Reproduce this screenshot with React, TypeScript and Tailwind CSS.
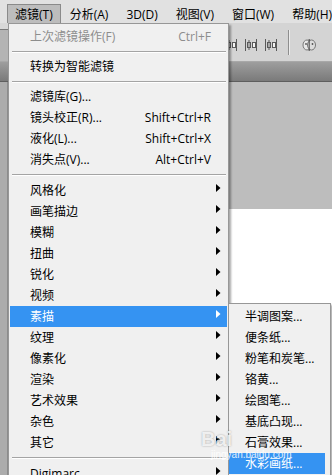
import React from "react";

type Row =
  | { kind: "item"; label: string; shortcut?: string; arrow?: boolean; disabled?: boolean; hl?: boolean }
  | { kind: "sep"; h: 9 | 10 };

const rows: Row[] = [
  { kind: "item", label: "上次滤镜操作(F)", shortcut: "Ctrl+F", disabled: true },
  { kind: "sep", h: 9 },
  { kind: "item", label: "转换为智能滤镜" },
  { kind: "sep", h: 9 },
  { kind: "item", label: "滤镜库(G)..." },
  { kind: "item", label: "镜头校正(R)...", shortcut: "Shift+Ctrl+R" },
  { kind: "item", label: "液化(L)...", shortcut: "Shift+Ctrl+X" },
  { kind: "item", label: "消失点(V)...", shortcut: "Alt+Ctrl+V" },
  { kind: "sep", h: 10 },
  { kind: "item", label: "风格化", arrow: true },
  { kind: "item", label: "画笔描边", arrow: true },
  { kind: "item", label: "模糊", arrow: true },
  { kind: "item", label: "扭曲", arrow: true },
  { kind: "item", label: "锐化", arrow: true },
  { kind: "item", label: "视频", arrow: true },
  { kind: "item", label: "素描", arrow: true, hl: true },
  { kind: "item", label: "纹理", arrow: true },
  { kind: "item", label: "像素化", arrow: true },
  { kind: "item", label: "渲染", arrow: true },
  { kind: "item", label: "艺术效果", arrow: true },
  { kind: "item", label: "杂色", arrow: true },
  { kind: "item", label: "其它", arrow: true },
  { kind: "sep", h: 10 },
  { kind: "item", label: "Digimarc", arrow: true },
];

const subItems = ["半调图案...", "便条纸...", "粉笔和炭笔...", "铬黄...", "绘图笔...", "基底凸现...", "石膏效果...", "水彩画纸..."];

const menus = ["分析(A)", "3D(D)", "视图(V)", "窗口(W)", "帮助(H)"];

function Arrow({ white }: { white?: boolean }) {
  return (
    <svg width="5" height="8" viewBox="0 0 5 8">
      <polygon points="0,0 4.5,4 0,8" fill={white ? "#ffffff" : "#000000"} />
    </svg>
  );
}

function AlignIcon() {
  return (
    <svg width="14" height="12" viewBox="0 0 14 12">
      <line x1="1.5" y1="0" x2="1.5" y2="12" stroke="#5a5a5a" />
      <rect x="3.5" y="3.5" width="3" height="5" fill="#f4f4f4" stroke="#5a5a5a" />
      <line x1="5" y1="1" x2="5" y2="11" stroke="#5a5a5a" />
      <rect x="8.5" y="3.5" width="3" height="5" fill="#f4f4f4" stroke="#5a5a5a" />
      <line x1="12.5" y1="0" x2="12.5" y2="12" stroke="#5a5a5a" />
    </svg>
  );
}

export default function App() {
  return (
    <div className="relative h-[475px] w-[332px] overflow-hidden bg-[#bababa] font-['Open_Sans','Noto_Sans_CJK_SC',sans-serif] text-[12px] text-black select-none">
      {/* menubar */}
      <div className="flex h-[23px] items-end overflow-hidden whitespace-nowrap bg-[#e1e1e1] pl-[7px] leading-[18px]">
        <div className="h-[19px] shrink-0 border border-b-0 border-[#8a8a8a] bg-[#bdbdbd] px-[7px] pt-[1px]">滤镜(T)</div>
        {menus.map((m) => (
          <div key={m} className="h-[19px] shrink-0 border border-transparent px-[8px] pt-[1px]">
            {m}
          </div>
        ))}
      </div>

      {/* workspace */}
      <div className="flex h-[452px] flex-col">
        {/* options bar */}
        <div className="flex h-[39px] border-b border-[#a8a8a8] bg-[#d4d4d4]">
          <div className="flex w-[8px] flex-col">
            <div className="h-[7px] border-b border-[#7a7a7a] bg-[#d8d8d8]" />
            <div className="flex-1 bg-[#b4b4b4]" />
          </div>
          <div className="flex flex-1 items-center pl-[216px]">
            <div className="flex items-center gap-[6px] pt-[6px]">
              <AlignIcon />
              <AlignIcon />
              <AlignIcon />
            </div>
            <div className="ml-[10px] h-[25px] w-[2px] border-l border-[#8e8e8e] border-r border-r-[#ececec]" />
            <div className="ml-[12px] pt-[5px]">
              <svg width="14" height="14" viewBox="0 0 14 14">
                <ellipse cx="5" cy="7" rx="4" ry="5" fill="#e8e8e8" stroke="#777" />
                <ellipse cx="9.5" cy="7" rx="4" ry="5" fill="#dcdcdc" stroke="#777" />
                <line x1="7.2" y1="1" x2="7.2" y2="13" stroke="#444" />
                <circle cx="4" cy="6" r="0.9" fill="#555" />
                <circle cx="10.5" cy="6" r="0.9" fill="#555" />
              </svg>
            </div>
          </div>
        </div>
        {/* dark bar */}
        <div className="h-[20px] border-b border-[#5e5e5e] bg-gradient-to-b from-[#9e9e9e] to-[#7a7a7a]" />
        {/* main area */}
        <div className="flex flex-1">
          <div className="w-[8px] border-r border-[#8c8c8c] bg-[#acacac]" />
          <div className="flex flex-1 flex-col">
            <div className="h-[127px] bg-[#bdbdbd]" />
            <div className="flex-1 bg-white" />
          </div>
        </div>
      </div>

      {/* filter menu */}
      <div className="absolute left-[8px] top-[23px] w-[221px] border border-[#979797] bg-[#f0f0f0] px-[1px] pt-[2px] pb-[4px] shadow-[2px_2px_2px_rgba(0,0,0,0.35)]">
        {rows.map((r, i) =>
          r.kind === "sep" ? (
            <div key={i} className={`flex ${r.h === 9 ? "h-[9px]" : "h-[10px]"} items-center pl-[2px] pr-[1px]`}>
              <div className="w-full border-t border-b border-[#a4a4a4] border-b-white" />
            </div>
          ) : (
            <div
              key={i}
              className={`flex h-[21px] items-center whitespace-nowrap leading-[21px] ${r.hl ? "bg-[#3593f2] text-white" : r.disabled ? "text-[#8d8d8d]" : "text-black"}`}
            >
              <span className="pl-[20px]">{r.label}</span>
              <span className="flex-1" />
              {r.shortcut && <span>{r.shortcut}</span>}
              <span className="flex h-full w-[16px] items-start pl-[5px] pt-[4px]">{r.arrow && <Arrow white={r.hl} />}</span>
            </div>
          )
        )}
      </div>

      {/* submenu */}
      <div className="absolute left-[228px] top-[303px] w-[103px] border border-[#979797] bg-[#f0f0f0] pt-[2px] pb-[4px] shadow-[2px_2px_2px_rgba(0,0,0,0.3)]">
        {subItems.map((s, i) => (
          <div
            key={i}
            className={`mr-[5px] h-[21px] whitespace-nowrap pl-[16px] leading-[21px] ${i === subItems.length - 1 ? "bg-[#3593f2] text-white" : "text-black"}`}
          >
            {s}
          </div>
        ))}
      </div>

      {/* watermark */}
      <div className="pointer-events-none absolute left-[201px] top-[429px] flex items-end gap-[2px] text-white/80 [text-shadow:0_0_2px_rgba(0,0,0,0.35)]">
        <span className="font-['Liberation_Sans',sans-serif] text-[20px] font-bold leading-[20px]">Bai</span>
      </div>
      <div className="pointer-events-none absolute left-[211px] top-[450px] font-['Liberation_Sans',sans-serif] text-[10px] leading-[10px] text-white/85">
        jingyan.baidu.com
      </div>
    </div>
  );
}
